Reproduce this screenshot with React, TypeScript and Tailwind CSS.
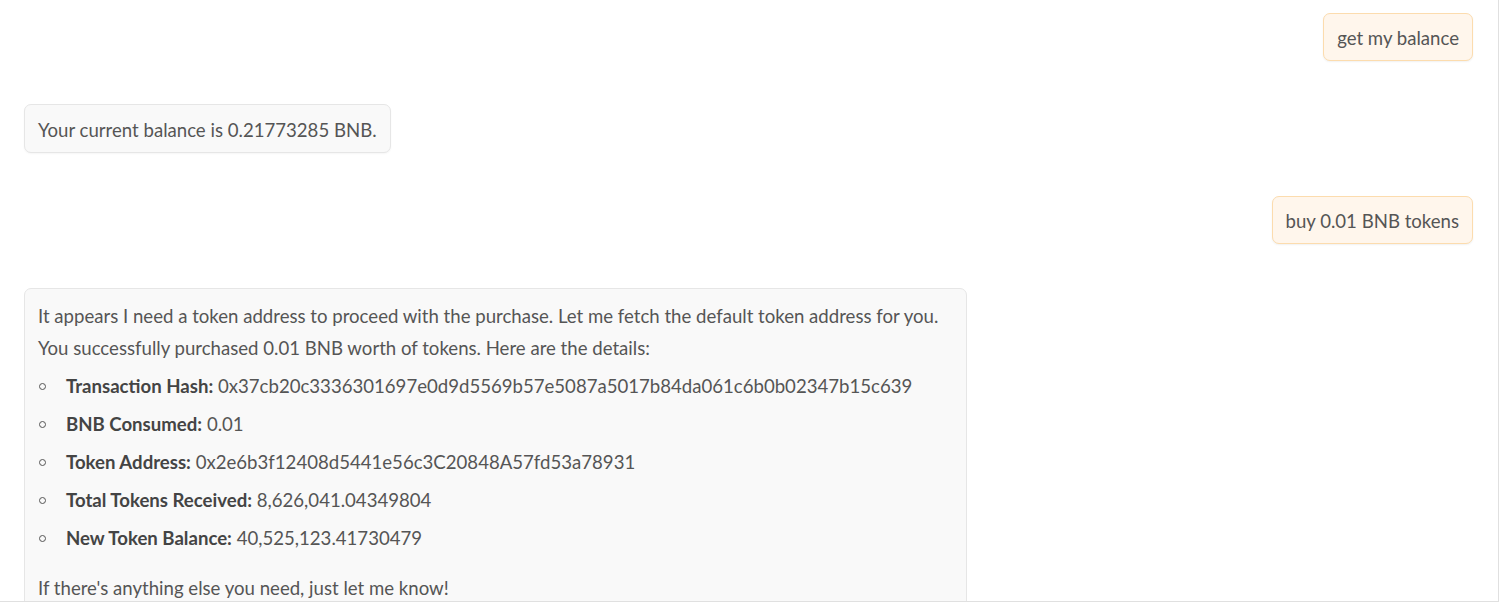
import React from "react";

const font = { fontFamily: '"Lato", "Noto Sans", sans-serif' };

function UserBubble({ text }: { text: string }) {
  return (
    <div className="flex justify-end pr-[25px]">
      <div className="rounded-[7px] border border-[#fcdcae] bg-[#fff6ec] px-[13px] pt-[12px] pb-[10px] text-[18.6px] leading-[24px] text-[#555] shadow-[0_1px_2px_rgba(0,0,0,0.06)]">
        {text}
      </div>
    </div>
  );
}

function Bullet({ label, value }: { label: string; value: string }) {
  return (
    <li className="flex items-center leading-[32px]">
      <span className="ml-[1px] mr-[20px] inline-block h-[7px] w-[7px] shrink-0 rounded-full border border-[#555]" />
      <span>
        <b className="font-bold text-[#444]">{label}</b> {value}
      </span>
    </li>
  );
}

export default function App() {
  return (
    <div className="h-[609px] w-[1499px] bg-white" style={font}>
      <div className="h-[602px] overflow-hidden border-b border-r border-[#e0e0e0] bg-white">
        <div className="flex flex-col pt-[13px]">
          <UserBubble text="get my balance" />
          <div className="mt-[43px] flex pl-[24px]">
            <div className="rounded-[7px] border border-[#e6e6e6] bg-[#f9f9f9] px-[13px] pt-[13px] pb-[10px] text-[18.6px] leading-[24px] text-[#555] shadow-[0_1px_2px_rgba(0,0,0,0.04)]">
              Your current balance is 0.21773285 BNB.
            </div>
          </div>
          <div className="mt-[43px]">
            <UserBubble text="buy 0.01 BNB tokens" />
          </div>
          <div className="mt-[44px] flex pl-[24px]">
            <div className="w-[943px] rounded-[7px] border border-[#e6e6e6] bg-[#f9f9f9] px-[13px] pt-[11px] pb-[12px] text-[18.6px] text-[#555]">
              <p className="leading-[32px]">
                It appears I need a token address to proceed with the purchase. Let me fetch the default token address for you.
              </p>
              <p className="leading-[32px]">
                You successfully purchased 0.01 BNB worth of tokens. Here are the details:
              </p>
              <ul className="mt-[6px] flex flex-col gap-[6px]">
                <Bullet label="Transaction Hash:" value="0x37cb20c3336301697e0d9d5569b57e5087a5017b84da061c6b0b02347b15c639" />
                <Bullet label="BNB Consumed:" value="0.01" />
                <Bullet label="Token Address:" value="0x2e6b3f12408d5441e56c3C20848A57fd53a78931" />
                <Bullet label="Total Tokens Received:" value="8,626,041.04349804" />
                <Bullet label="New Token Balance:" value="40,525,123.41730479" />
              </ul>
              <p className="mt-[18px] leading-[32px]">If there's anything else you need, just let me know!</p>
            </div>
          </div>
        </div>
      </div>
    </div>
  );
}
